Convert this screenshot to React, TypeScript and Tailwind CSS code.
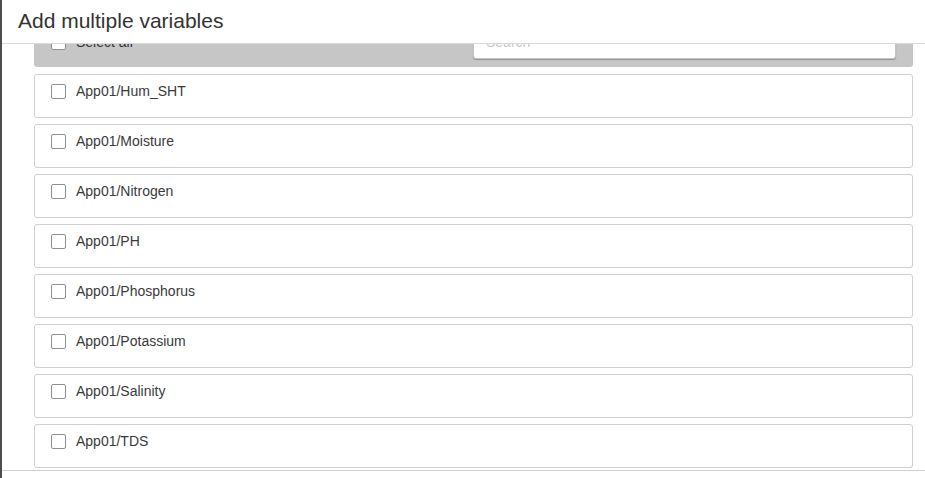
const variables = [
  'App01/Hum_SHT',
  'App01/Moisture',
  'App01/Nitrogen',
  'App01/PH',
  'App01/Phosphorus',
  'App01/Potassium',
  'App01/Salinity',
  'App01/TDS',
]

function Box() {
  return <span className="block w-[15px] h-[15px] shrink-0 rounded-[2px] border border-[#8f8f8f] bg-white" />
}

export default function App() {
  return (
    <div className="flex w-[925px] h-[478px] bg-white font-['Liberation_Sans',Arial,sans-serif] text-[#333]">
      {/* modal edge */}
      <div className="w-[2px] bg-[#4d4d4d]" />

      <div className="flex flex-col flex-1 min-w-0">
        {/* Header */}
        <div className="h-[44px] shrink-0 border-b border-[#d9d9d9] pl-[16px] flex items-center">
          <h4 className="text-[21px] leading-none pb-[2px] text-[#333]">Add multiple variables</h4>
        </div>

        {/* Body (scrolled) */}
        <div className="h-[426px] shrink-0 overflow-hidden pl-[32px] pr-[12px]">
          <div className="-mt-[21px] h-[44px] bg-[#c6c6c6] rounded-[3px] flex items-start justify-between pl-[17px] pr-[17px]">
            <label className="flex items-center gap-[10px] pt-[12px] text-[14px] leading-[15px]">
              <Box />
              Select all
            </label>
            <div className="mt-[2px] h-[34px] w-[423px] bg-white border border-[#c4c4c4] rounded-[3px] shadow-[0_1px_1px_rgba(0,0,0,0.25)] flex items-center px-[12px] text-[14px] text-[#c8c8c8]">
              Search
            </div>
          </div>

          <div className="mt-[7px] flex flex-col gap-[6px]">
            {variables.map(v => (
              <div
                key={v}
                className="h-[44px] border border-[#cfcfcf] rounded-[3px] bg-white flex items-start pl-[16px] pt-[9px]"
              >
                <label className="flex items-center gap-[10px] text-[14px] leading-[15px] text-[#3a3a3a]">
                  <Box />
                  {v}
                </label>
              </div>
            ))}
          </div>
        </div>

        {/* Footer */}
        <div className="flex-1 border-t border-[#cfcfcf]" />
      </div>
    </div>
  )
}
